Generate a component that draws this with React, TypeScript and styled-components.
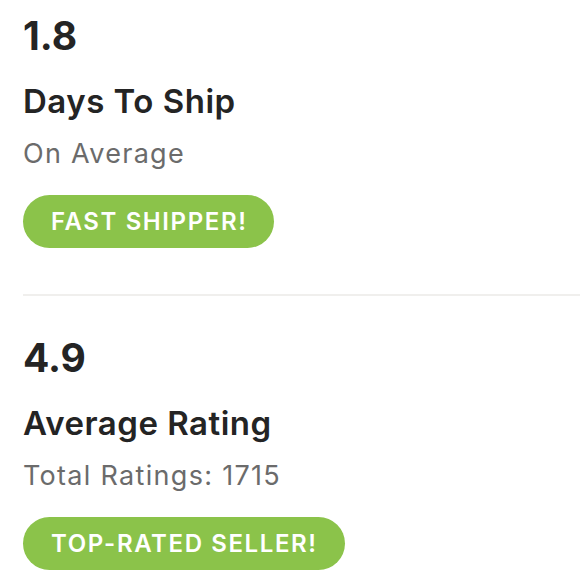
import React from 'react'
import styled, { createGlobalStyle } from 'styled-components'

const GlobalStyle = createGlobalStyle`
  body {
    margin: 0;
    background: #ffffff;
    font-family: Inter, "Open Sans", sans-serif;
  }
`

interface StatProps {
  value: string
  title: string
  subtitle: string
  badge: string
}

const stats: StatProps[] = [
  { value: '1.8', title: 'Days To Ship', subtitle: 'On Average', badge: 'FAST SHIPPER!' },
  { value: '4.9', title: 'Average Rating', subtitle: 'Total Ratings: 1715', badge: 'TOP-RATED SELLER!' },
]

const Stat: React.FC<StatProps> = ({ value, title, subtitle, badge }) => {
  return (
    <Section>
      <Value>{value}</Value>
      <Title>{title}</Title>
      <Subtitle>{subtitle}</Subtitle>
      <Badge>{badge}</Badge>
    </Section>
  )
}

const App: React.FC = () => {
  return (
    <>
      <GlobalStyle />
      <Page>
        {stats.map((s, i) => (
          <Stat key={`${i}`} {...s} />
        ))}
      </Page>
    </>
  )
}

const Page = styled.div`
  padding: 12px 0 0 23px;
  width: 557px;
`

const Section = styled.section`
  display: flex;
  flex-direction: column;
  align-items: flex-start;
  padding-bottom: 46px;

  & + & {
    border-top: 2px solid #f0efed;
    padding-top: 38px;
  }

  &:last-child {
    padding-bottom: 0;
  }
`

const Value = styled.div`
  font-size: 39px;
  line-height: 48px;
  font-weight: 700;
  color: #242424;
`

const Title = styled.div`
  margin-top: 21px;
  font-size: 33px;
  line-height: 40px;
  font-weight: 600;
  letter-spacing: 0.5px;
  color: #242424;
`

const Subtitle = styled.div`
  margin-top: 17px;
  font-size: 27px;
  line-height: 32px;
  letter-spacing: 1.3px;
  color: #6b6b6b;
`

const Badge = styled.div`
  margin-top: 25px;
  height: 53px;
  display: flex;
  align-items: center;
  padding: 0 27px 0 28px;
  border-radius: 27px;
  background: #8bc34a;
  color: #ffffff;
  font-size: 24px;
  font-weight: 600;
  letter-spacing: 1.6px;
`

export default App
